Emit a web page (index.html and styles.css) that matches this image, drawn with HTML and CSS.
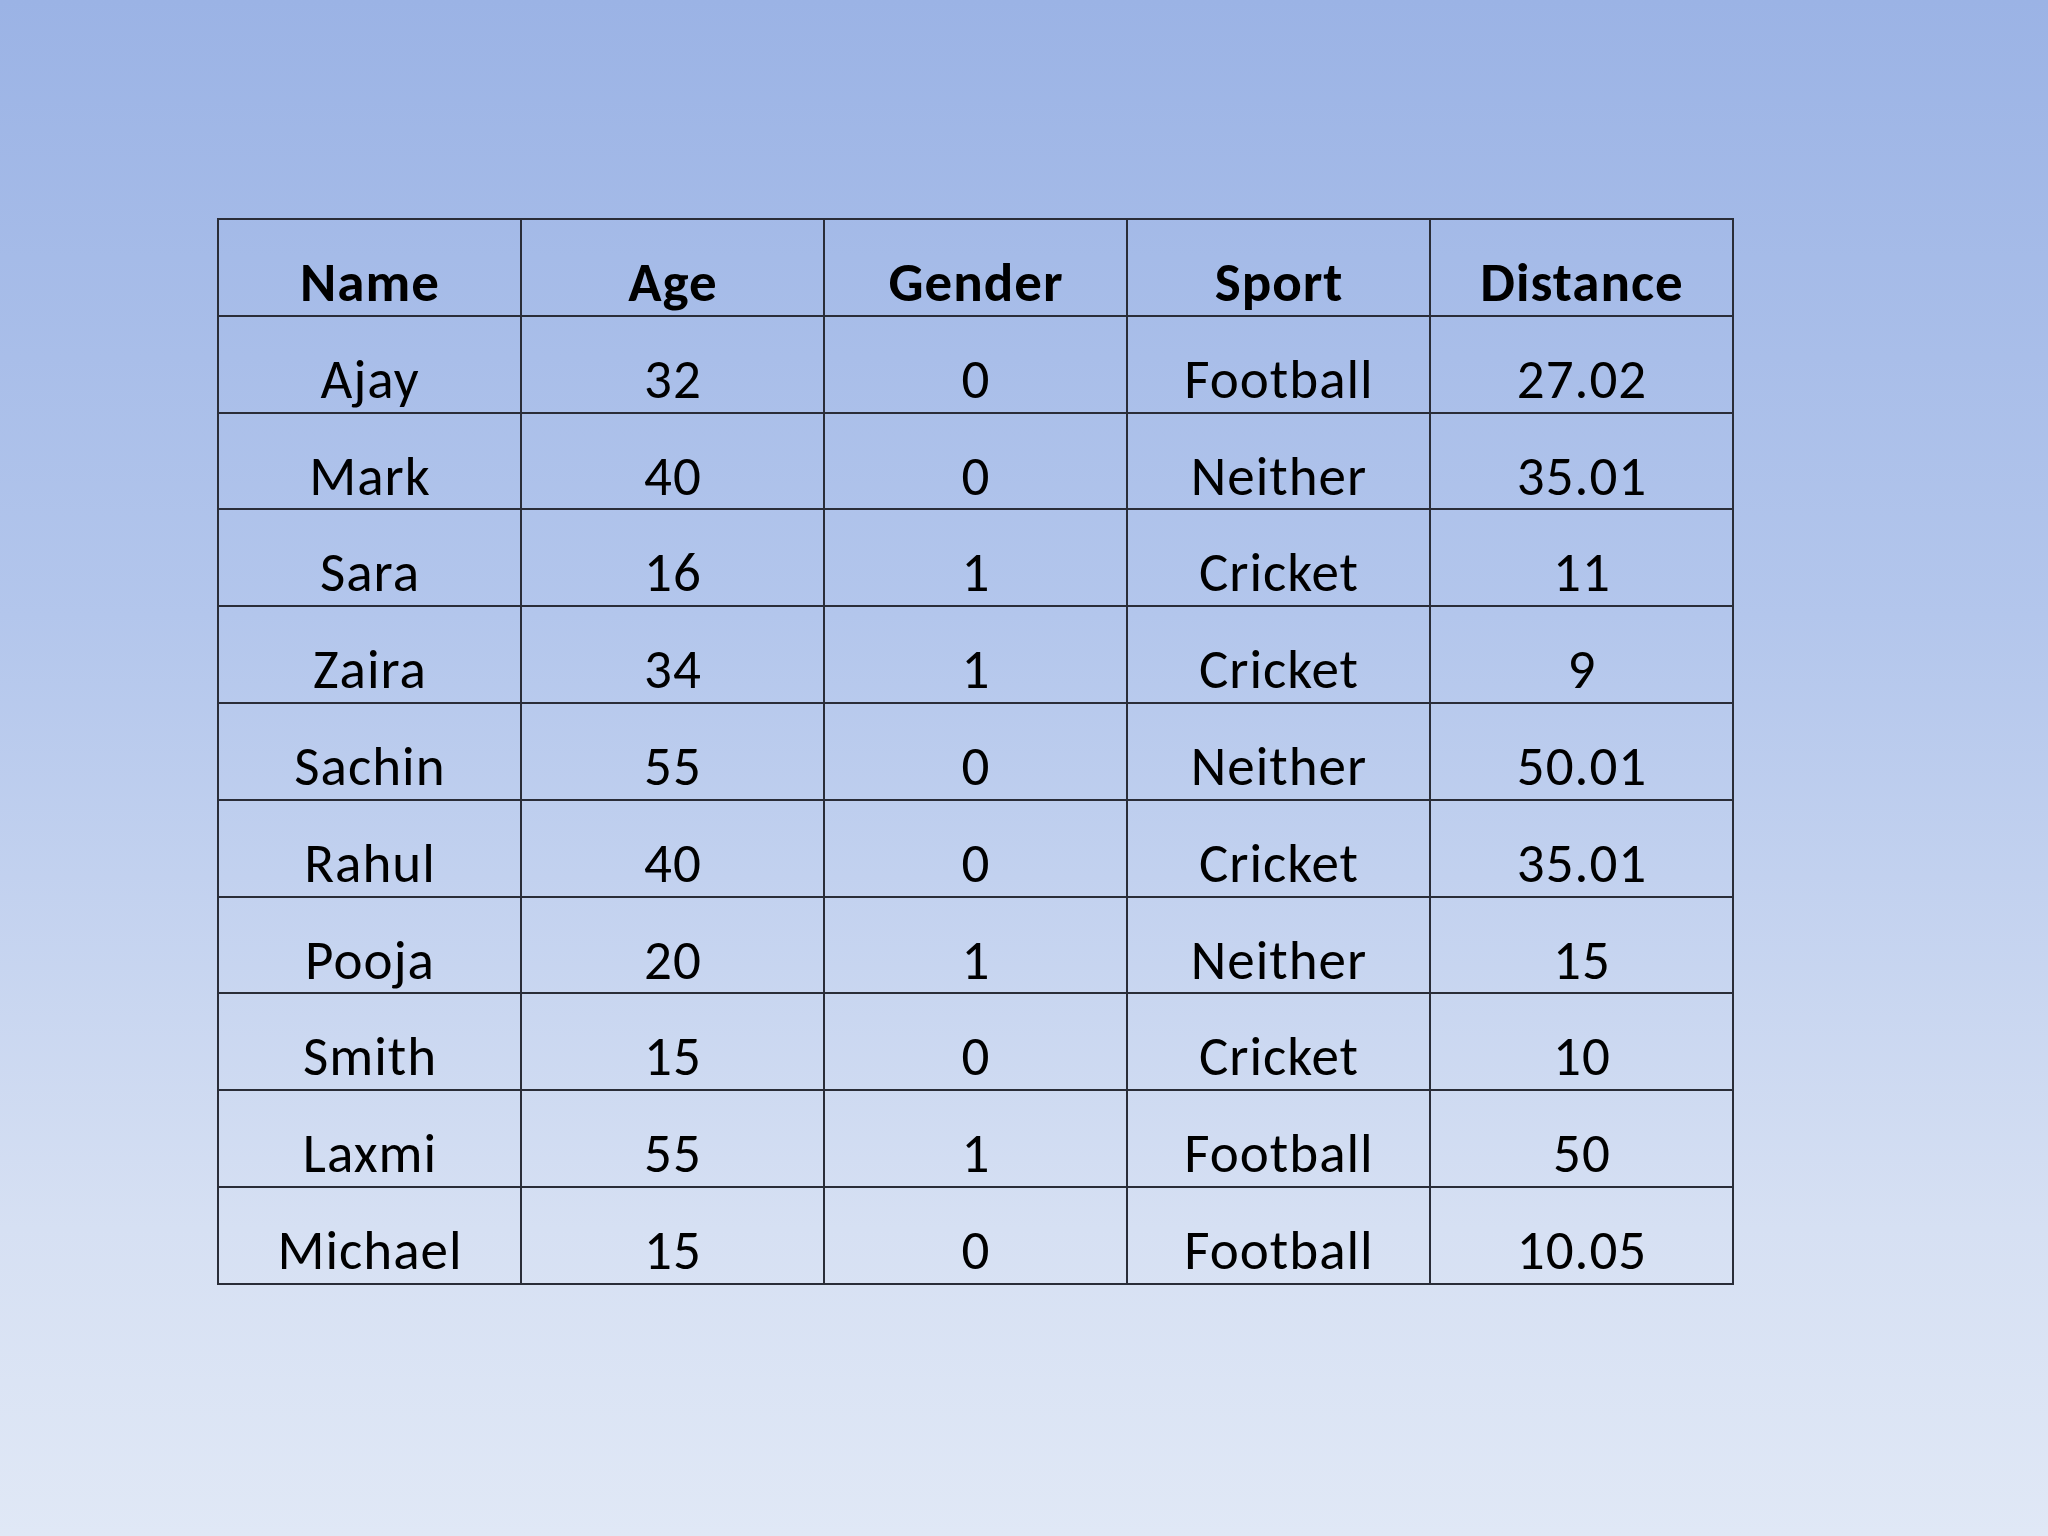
FILE: index.html
```html
<!DOCTYPE html>
<html lang="en">
<head>
<meta charset="utf-8">
<title>Sports data</title>
<link rel="stylesheet" href="styles.css">
</head>
<body>
<main class="slide">
  <table class="data">
    <thead>
      <tr><th>Name</th><th>Age</th><th>Gender</th><th>Sport</th><th>Distance</th></tr>
    </thead>
    <tbody>
      <tr><td>Ajay</td><td>32</td><td>0</td><td>Football</td><td>27.02</td></tr>
      <tr><td>Mark</td><td>40</td><td>0</td><td>Neither</td><td>35.01</td></tr>
      <tr><td>Sara</td><td>16</td><td>1</td><td>Cricket</td><td>11</td></tr>
      <tr><td>Zaira</td><td>34</td><td>1</td><td>Cricket</td><td>9</td></tr>
      <tr><td>Sachin</td><td>55</td><td>0</td><td>Neither</td><td>50.01</td></tr>
      <tr><td>Rahul</td><td>40</td><td>0</td><td>Cricket</td><td>35.01</td></tr>
      <tr><td>Pooja</td><td>20</td><td>1</td><td>Neither</td><td>15</td></tr>
      <tr><td>Smith</td><td>15</td><td>0</td><td>Cricket</td><td>10</td></tr>
      <tr><td>Laxmi</td><td>55</td><td>1</td><td>Football</td><td>50</td></tr>
      <tr><td>Michael</td><td>15</td><td>0</td><td>Football</td><td>10.05</td></tr>
    </tbody>
  </table>
</main>
</body>
</html>
```
FILE: styles.css
```css
html, body {
  margin: 0;
  padding: 0;
}
body {
  width: 2048px;
  height: 1536px;
  background: linear-gradient(to bottom, #9bb3e5 0%, #b3c6ec 40%, #d6e0f3 80%, #e0e8f6 100%);
  font-family: Carlito, Calibri, Lato, "Liberation Sans", sans-serif;
  color: #000;
  overflow: hidden;
}
.slide {
  padding: 218px 0 0 217px;
}
.data {
  border-collapse: collapse;
  table-layout: fixed;
  width: 1517px;
}
.data th, .data td {
  width: 303px;
  height: 96.8px;
  border: 2px solid #2a2d38;
  box-sizing: border-box;
  padding: 35px 0 0 1px;
  vertical-align: top;
  text-align: center;
  font-size: 55px;
  line-height: 55px;
  letter-spacing: 1px;
  background: transparent;
}
.data th {
  font-weight: bold;
}
```
